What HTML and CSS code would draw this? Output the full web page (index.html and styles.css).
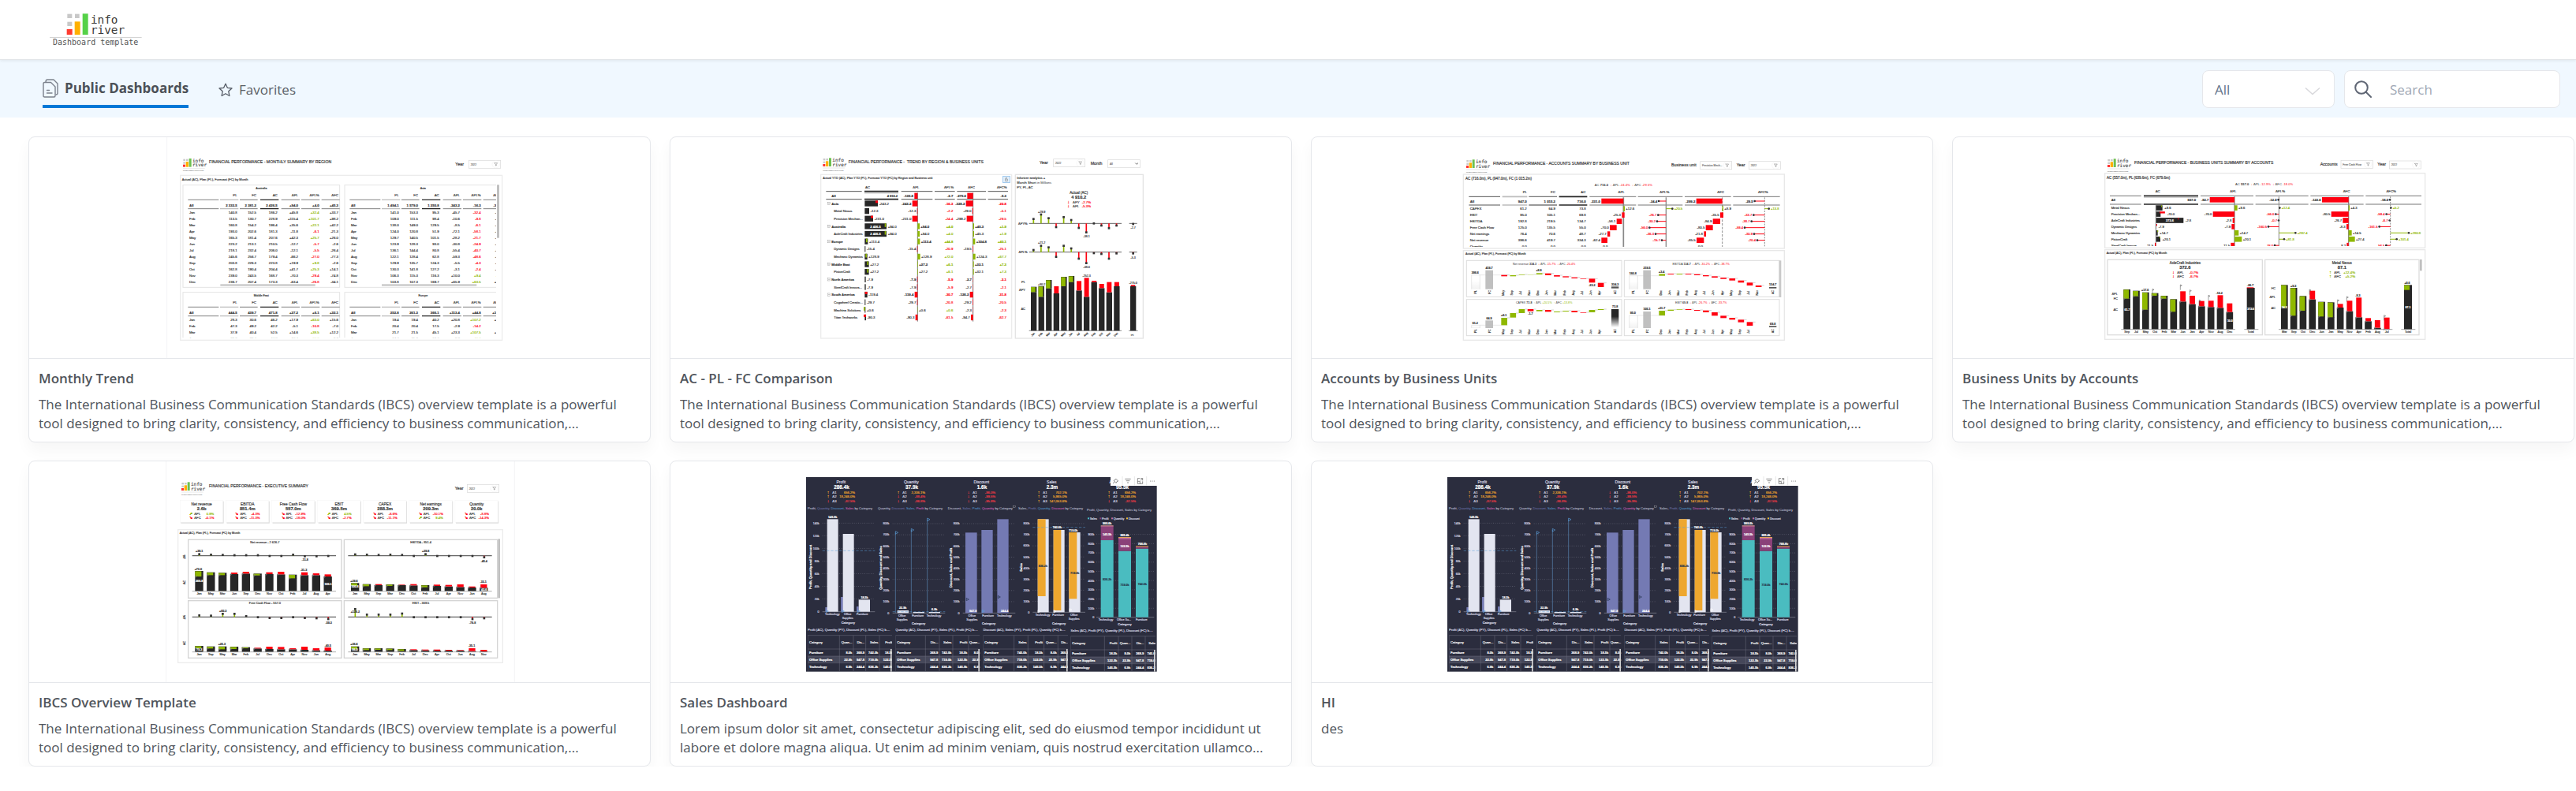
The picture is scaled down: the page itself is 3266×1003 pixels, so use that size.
FILE: index.html
```html
<!DOCTYPE html>
<html lang="en">
<head>
<meta charset="utf-8">
<meta name="viewport" content="width=device-width, initial-scale=1">
<title>Public Dashboards - Inforiver</title>
<link rel="stylesheet" href="styles.css">
</head>
<body>
<header class="site-header">
  <svg class="logo" viewBox="190 48 351 132" role="img" aria-label="Inforiver Dashboard template">
    <g fill="#c8c8c8"><rect x="257" y="53" width="18" height="16"/><rect x="286" y="53" width="17" height="16"/><rect x="257" y="83" width="18" height="16"/></g>
    <rect x="255" y="111" width="21" height="21" fill="#ff3b30"/>
    <rect x="285" y="82" width="21" height="50" fill="#ffb000"/>
    <rect x="315" y="52" width="21" height="80" fill="#56d148"/>
    <path d="M190 142.500H540" stroke="#d4d4d4" stroke-width="3"/>
    <g class="mono" fill="#3c3c3c"><text x="346" y="90" font-size="43">info</text><text x="346" y="130" font-size="43">river</text><text x="202" y="172" font-size="30" fill="#555">Dashboard template</text></g>
  </svg>
</header>
<div class="toolbar">
  <nav class="tabs" aria-label="Dashboards">
    <a class="tab tab-active" href="#public" aria-current="page">
      <svg width="20" height="24" viewBox="0 0 20 24" fill="none" stroke="#7b818c" stroke-width="1.400" stroke-linejoin="round" stroke-linecap="round" aria-hidden="true"><path d="M3 4.500H10.500L16 10V21.500Q16 23 14.500 23H2.500Q1 23 1 21.500V6Q1 4.500 2.500 4.500Z"/><path d="M4 4Q4 1 6 1H14L19 6V18Q19 20 17 20M5.500 14.500H8.500M5.500 18H12"/></svg>
      <span>Public Dashboards</span>
    </a>
    <a class="tab" href="#favorites">
      <svg width="18" height="18" viewBox="0 0 18 18" fill="none" stroke="#555b66" stroke-width="1.300" stroke-linejoin="round" aria-hidden="true"><path d="M9 1.200L11.300 6.300L17 7L12.800 10.800L13.900 16.500L9 13.700L4.100 16.500L5.200 10.800L1 7L6.700 6.300Z"/></svg>
      <span>Favorites</span>
    </a>
  </nav>
  <div class="filters">
    <div class="field select-field">
      <select aria-label="Filter dashboards"><option>All</option></select>
      <svg class="chevron" width="20" height="12" viewBox="0 0 20 12" fill="none" stroke="#d9d9dc" stroke-width="1.600" aria-hidden="true"><path d="M1 1.500L10 9.500L19 1.500"/></svg>
    </div>
    <label class="field search-field">
      <svg width="22" height="22" viewBox="0 0 22 22" fill="none" stroke="#5f6674" stroke-width="2" stroke-linecap="round" aria-hidden="true"><circle cx="9" cy="9" r="7.800"/><path d="M14.500 14.500L21 21"/></svg>
      <input type="search" placeholder="Search" aria-label="Search">
    </label>
  </div>
</div>
<main class="cards">
  <article class="card raised"><div class="thumb" data-chart="monthly"></div><div class="card-body"><h2>Monthly Trend</h2><p>The International Business Communication Standards (IBCS) overview template is a powerful tool designed to bring clarity, consistency, and efficiency to business communication,...</p></div></article>
  <article class="card raised"><div class="thumb" data-chart="trend"></div><div class="card-body"><h2>AC - PL - FC Comparison</h2><p>The International Business Communication Standards (IBCS) overview template is a powerful tool designed to bring clarity, consistency, and efficiency to business communication,...</p></div></article>
  <article class="card raised"><div class="thumb" data-chart="accounts"></div><div class="card-body"><h2>Accounts by Business Units</h2><p>The International Business Communication Standards (IBCS) overview template is a powerful tool designed to bring clarity, consistency, and efficiency to business communication,...</p></div></article>
  <article class="card raised"><div class="thumb" data-chart="units"></div><div class="card-body"><h2>Business Units by Accounts</h2><p>The International Business Communication Standards (IBCS) overview template is a powerful tool designed to bring clarity, consistency, and efficiency to business communication,...</p></div></article>
  <article class="card raised"><div class="thumb" data-chart="overview"></div><div class="card-body"><h2>IBCS Overview Template</h2><p>The International Business Communication Standards (IBCS) overview template is a powerful tool designed to bring clarity, consistency, and efficiency to business communication,...</p></div></article>
  <article class="card raised"><div class="thumb" data-chart="sales"></div><div class="card-body"><h2>Sales Dashboard</h2><p>Lorem ipsum dolor sit amet, consectetur adipiscing elit, sed do eiusmod tempor incididunt ut labore et dolore magna aliqua. Ut enim ad minim veniam, quis nostrud exercitation ullamco...</p></div></article>
  <article class="card raised"><div class="thumb" data-chart="sales"></div><div class="card-body"><h2>HI</h2><p>des</p></div></article>
</main>
<script src="charts.js"></script>
</body>
</html>
```
FILE: styles.css
```css
* { box-sizing: border-box; }
body {
  margin: 0;
  background: #fff;
  color: #50555c;
  font-family: "Open Sans", "Noto Sans", sans-serif;
  font-size: 17px;
  line-height: 24px;
}
.mono { font-family: "DejaVu Sans Mono", monospace; }

.site-header {
  position: relative;
  height: 76px;
  padding: 16px 63px;
  border-bottom: 1px solid #e2e5e9;
  box-shadow: 0 1px 4px rgba(0, 0, 0, 0.08);
}
.logo { display: block; width: 117px; height: 44px; }

.toolbar {
  display: flex;
  justify-content: space-between;
  align-items: center;
  flex-wrap: wrap;
  padding: 12px 20px 12px 54px;
  background: #f0f8ff;
}
.tabs { display: flex; gap: 38px; }
.tab {
  display: flex;
  align-items: center;
  gap: 8px;
  height: 49px;
  padding-top: 2px;
  color: #5a5f67;
  text-decoration: none;
}
.tab-active {
  padding-top: 3px;
  border-bottom: 4px solid #0078d7;
  color: #4c5158;
  font-weight: 700;
}

.filters { display: flex; gap: 12px; }
.field {
  display: flex;
  align-items: center;
  height: 48px;
  border: 1px solid #e5e7eb;
  border-radius: 8px;
  background: #fff;
}
.select-field { position: relative; width: 168px; }
.select-field select {
  width: 100%;
  height: 100%;
  padding: 2px 15px 0;
  border: 0;
  border-radius: 8px;
  background: none;
  appearance: none;
  color: #64748b;
  font: inherit;
}
.chevron { position: absolute; right: 17px; top: 20px; pointer-events: none; }
.search-field { width: 274px; padding: 0 12px; gap: 23px; }
.search-field input {
  flex: 1;
  min-width: 0;
  padding: 2px 0 0;
  border: 0;
  background: none;
  color: #50555c;
  font: inherit;
  outline: 0;
}
.search-field input::placeholder { color: #a0a7b4; opacity: 1; }

.cards {
  display: grid;
  grid-template-columns: repeat(auto-fill, minmax(min(700px, 100%), 1fr));
  gap: 23px 24px;
  padding: 24px 2px 0 36px;
  overflow: hidden;
}
.card {
  border: 1px solid #e5e7eb;
  border-radius: 8px;
  background: #fff;
}
.raised { box-shadow: 0 10px 20px rgba(0, 0, 0, 0.04); }
.thumb { border-bottom: 1px solid #e5e7eb; overflow: hidden; }
.thumb svg { display: block; width: 100%; }
.thumb > svg { height: 280px; }
.thumb text { font-family: "Liberation Sans", Arial, sans-serif; }
.thumb .mono text { font-family: "DejaVu Sans Mono", monospace; }
.card-body { display: grid; gap: 9px; padding: 13px 12px 11px; }
.card-body h2 { margin: 0; font-size: 17px; font-weight: 600; line-height: 24px; }
.card-body p { height: 48px; margin: 0; overflow: hidden; }
```
FILE: charts.js
```js
const RED = '#ff0010', GREEN = '#8fb800', INK = '#262626', GREY = '#bdbdbd', TXT = '#333';

const R = (x, y, w, h, f, extra = '') => `<rect x="${x}" y="${y}" width="${w}" height="${h}" fill="${f}" ${extra}/>`;
const L = (x1, y1, x2, y2, c = '#777', w = 2, extra = '') => `<path d="M${x1} ${y1}L${x2} ${y2}" stroke="${c}" stroke-width="${w}" fill="none" ${extra}/>`;
const T = (x, y, s, size = 14, c = TXT, a = 'start', bold = 0, extra = '') =>
  `<text x="${x}" y="${y}" font-size="${size}" fill="${c}" ${s.includes('<tspan') ? '' : `stroke="${c}" stroke-width=".5"`} text-anchor="${a}" ${bold ? 'font-weight="700"' : ''} ${extra}>${s}</text>`;
const box = (x, y, w, h, c = '#e4e4e4', sw = 3) => R(x, y, w, h, '#fff', `stroke="${c}" stroke-width="${sw}"`);
const clip = (x, y, w, h, body) => `<svg x="${x}" y="${y}" width="${w}" height="${h}" viewBox="${x} ${y} ${w} ${h}" style="width:${w}px">${body}</svg>`;
const signColor = v => (v.startsWith('-') ? RED : GREEN);
const vert = (x, y, s, size = 12, c = TXT, bold = 0, a = 'middle') => T(x, y, s, size, c, a, bold, `transform="rotate(-90 ${x} ${y})"`);

function logo(x, y) {
  return `<g transform="translate(${x} ${y})">` +
    R(1, 2, 8, 7, '#ccc') + R(12, 2, 8, 7, '#ccc') + R(1, 13, 8, 7, '#ccc') +
    R(0, 23, 9, 9, '#f33') + R(11, 12, 10, 20, '#ffb000') + R(23, 0, 9, 32, '#6cc050') +
    `<g class="mono">${T(36, 14, 'info', 18, '#555')}${T(36, 31, 'river', 18, '#555')}</g>` +
    L(0, 38, 83, 38, '#ddd', 2) + T(0, 49, 'INTELLIGENT ANALYTICS', 6.5, '#aaa') + '</g>';
}
function picker(label, lx, x, y, w, value, arrow) {
  return T(lx, y + 19, label, 16, '#333') + box(x, y, w, 30, '#d8d8d8', 2) +
    T(x + 7, y + 19, value, 10, '#777') +
    (arrow ? L(x + w - 18, y + 12, x + w - 13, y + 17, '#333', 2) + L(x + w - 13, y + 17, x + w - 7, y + 12, '#333', 2)
      : `<circle cx="${x + w - 18}" cy="${y + 15}" r="14" fill="#fff" stroke="#e8e8e8"/><path d="M${x + w - 24} ${y + 10}h12l-4 5v5h-3v-5z" fill="none" stroke="#777" stroke-width="1.5"/>`);
}

function monthly() {
  const cols = [272, 345, 425, 504, 584, 657];
  const rules = [[85, 117, '#444', 2], [207, 70, GREY, 4], [282, 68, '#777', 3], [360, 70, INK, 4], [440, 70, '#444', 2], [516, 70, '#444', 2], [593, 70, '#444', 2]];
  const months = ['Jan', 'Feb', 'Mar', 'Apr', 'May', 'Jun', 'Jul', 'Aug', 'Sep', 'Oct', 'Nov', 'Dec'];
  const table = (ox, oy, w, h, title, rows) => box(66 + ox, 161 + oy, w, h) + clip(66 + ox, 161 + oy, w, h,
    T(364 + ox, 177 + oy, title, 11, TXT, 'middle') +
    ['PL', 'FC', 'AC', 'ΔPL', 'ΔPL%', 'ΔFC'].map((s, i) => T(cols[i] + ox, 204 + oy, s, 13, TXT, 'end')).join('') +
    [217, 251].map(y => rules.map(r => L(r[0] + ox, y + oy, r[0] + r[1] + ox, y + oy, r[2], r[3])).join('')).join('') +
    rows.map((r, i) => {
      const y = (i ? 245 + i * 24 : 242) + oy;
      return T(90 + ox, y, i ? months[i - 1] : 'All', 13, TXT, 'start', !i) +
        r.split(' ').map((v, j) => T(cols[j] + ox, y, v.replace('_', ' '), 13, i && j === 4 ? signColor(v) : TXT, 'end', !i)).join('');
    }).join(''));
  const a = ['2_332.5 2_381.2 2_426.5 +94.0 +4.0 +45.3', '140.8 152.5 186.2 +45.8 +32.4 +33.7', '113.5 130.7 228.9 +115.4 +101.7 +98.2', '160.8 154.2 196.4 +35.6 +22.1 +42.2', '193.0 202.6 181.3 -11.8 -6.1 -21.3', '165.3 181.4 207.6 +42.3 +25.7 +26.0', '223.2 213.1 210.5 -12.7 -5.7 -2.6', '218.1 232.4 206.0 -12.1 -5.5 -26.4', '245.6 256.7 179.4 -66.2 -27.0 -77.3', '203.8 226.3 223.8 +19.9 +9.8 -2.6', '162.8 190.4 204.4 +41.7 +25.3 +14.1', '239.0 243.5 168.7 -70.3 -29.4 -74.8', '236.7 207.4 173.3 -63.4 -26.8 -34.1'];
  const b = ['1_494.1 1_579.0 1_250.8 -243.2 -16.3 -328', '141.0 153.3 95.3 -45.7 -32.4 -58', '109.0 111.5 98.4 -10.6 -9.8 -13', '138.0 149.0 129.5 -8.5 -6.1 -19', '124.0 120.8 51.9 -72.1 -58.1 -68', '129.7 140.5 101.5 -28.2 -21.7 -39', '123.9 128.3 93.0 -30.8 -24.9 -35', '136.1 144.4 80.8 -55.4 -40.7 -63', '122.1 128.4 62.8 -59.3 -48.6 -65', '129.9 135.7 124.3 -5.5 -4.3 -11', '130.3 141.8 127.2 -3.1 -2.4 -14', '106.3 115.3 116.3 +10.0 +9.4 +1', '103.8 107.3 169.7 +65.9 +63.5 +62'];
  const c = ['444.5 439.7 471.8 +27.2 +6.1 +32.1', '28.3 30.6 46.2 +17.9 +63.0 +15.6', '47.3 49.2 42.2 -5.1 -10.8 -7.0', '37.9 40.4 52.5 +14.6 +38.5 +12.2', '36.3 38.7 47.0 +10.7 +27.2 +8.3'];
  const d = ['252.8 261.3 366.1 +113.4 +44.8 +104', '19.4 19.4 40.2 +20.8 +107.2 +20', '20.4 20.4 17.5 -2.9 -14.2 -3', '21.7 21.5 45.1 +23.3 +107.5 +23', '24.7 25.3 34.7 +9.9 +40.2 +9'];
  return L(5, -21, 5, 819, '#f4f4f6', 3) + logo(66, 60) + T(165, 78, 'FINANCIAL PERFORMANCE - MONTHLY SUMMARY BY REGION', 15.5, '#333') +
    picker('Year', 1102, 1153, 67, 121, '2022') + box(56, 124, 1224, 627, '#ececec', 4) +
    T(62, 143, 'Actual (AC), Plan (PL), Forecast (FC) by Month', 12) +
    clip(56, 150, 1201, 592, table(0, 0, 596, 389, 'Australia', a) + table(615, 0, 590, 389, 'Asia', b) + table(0, 408, 596, 200, 'Middle East', c) + table(615, 408, 590, 200, 'Europe', d)) +
    R(208, 538, 361, 7, '#c8c8c8') + R(822, 538, 361, 7, '#c8c8c8') + R(1260, 160, 9, 202, '#c0c0c0');
}

function delta(x, y, n, label, h = 22, size = 13, bold = 0) {
  return R(n < 0 ? x + n : x, y - h / 2, Math.abs(n), h, n < 0 ? RED : GREEN) +
    T(n < 0 ? x + n - 4 : x + n + 4, y + 5, label, size, TXT, n < 0 ? 'end' : 'start', bold);
}
function pins(y, x0, step, vals, lastX, last) {
  const pin = (x, v) => L(x, y, x, y + v, v > 0 ? RED : GREEN, 5) + R(x - 4, y + v - 4, 8, 8, '#333');
  return vals.map((v, i) => pin(x0 + step * i, v)).join('') + (lastX ? L(lastX - 15, y, lastX + 15, y, '#666', 3) + pin(lastX, last) : '');
}

function trend() {
  const rows = [['All', 0, 0, '', '-135.8', -12, '-2.7', '-275.0', -22, '-5.3'], ['Asia', 0, 50, '-243.2', '-243.2', -20, '-16.3', '-328.2', -27, '-20.8'],
    ['Metal Nexus', 1, 17, '-12.3', '-12.3', -2, '-2.2', '-29.0', -3, '-5.1'], ['Precision Mechan...', 1, 32, '-231.0', '-231.0', -20, '-24.4', '-299.2', -24, '-29.5'],
    ['Australia', 0, 83, '+94.0', '+94.0', 8, '+4.0', '+45.3', 4, '+1.9'], ['AxleCraft Industries', 1, 83, '+94.0', '+94.0', 8, '+4.0', '+45.3', 4, '+1.9'],
    ['Europe', 0, 12, '+113.4', '+113.4', 9, '+44.8', '+104.8', 8, '+40.1'], ['Dynamic Designs', 1, 3, '-15.4', '-15.4', -2, '-20.9', '-19.5', -2, '-25.1'],
    ['Mechano Dynamics', 1, 10, '+128.9', '+128.9', 10, '+72.0', '+124.3', 9, '+67.7'], ['Middle East', 0, 16, '+27.2', '+27.2', 2, '+6.1', '+32.1', 3, '+7.3'],
    ['PistonCraft', 1, 16, '+27.2', '+27.2', 2, '+6.1', '+32.1', 3, '+7.3'], ['North America', 0, 4, '-7.9', '-7.9', -2, '-5.9', '-2.7', -1, '-2.1'],
    ['SteelCraft Innova...', 1, 4, '-7.9', '-7.9', -2, '-5.9', '-2.7', -1, '-2.1'], ['South America', 0, 10, '-119.4', '-119.4', -11, '-30.7', '-126.2', -12, '-31.8'],
    ['Cogwheel Creatio...', 1, 3, '-29.7', '-29.7', -2, '-20.8', '-29.2', -2, '-20.5'], ['Machina Solutions', 1, 3, '+0.6', '+0.6', 1, '+0.6', '-2.3', -1, '-2.3'],
    ['Titan Techworks', 1, 5, '-90.3', '-90.3', -8, '-61.5', '-94.7', -8, '-62.7']];
  let s = logo(70, 58) + T(167, 78, 'FINANCIAL PERFORMANCE -&#160; TREND BY REGION &amp; BUSINESS UNITS', 15.5, '#333') +
    picker('Year', 894, 947, 62, 120, '2022') + picker('Month', 1088, 1154, 65, 122, 'All', 1) +
    box(62, 121, 726, 623, '#ececec', 4) + box(802, 121, 486, 623, '#e4e4e4', 4) +
    T(70, 138, 'Actual YTD (AC), Plan YTD (PL), Forecast YTD (FC) by Region and Business unit', 11.5) +
    R(755, 127, 26, 25, '#e3f0fb', 'stroke="#7db4e8" stroke-width="2"') + `<path d="M764 146v-8h8v8zM765 138v-4h6" fill="none" stroke="#666" stroke-width="1.500"/>`;
  [['AC', 240], ['ΔPL', 424], ['ΔPL%', 549], ['ΔFC', 635], ['ΔFC%', 751]].forEach(h => { s += T(h[1], 173, h[0], 13, TXT, 'middle'); });
  [185, 215].forEach((y, i) => [[82, 218], [228, 357], [368, 487], [495, 572], [580, 690], [698, 774]].forEach((r, k) => { s += L(r[0], y, r[1], y, k === 1 ? INK : '#555', k === 1 ? 5 : 3); }));
  s += R(228, 189, 129, 4, GREY) + L(430, 190, 430, 680, '#777', 3) + L(641, 190, 641, 680, '#777', 3);
  rows.forEach((r, i) => {
    const y = i ? 231 + (i - 1) * 28.9 : 202, bold = !r[1];
    s += T(r[1] ? 112 : 103, y + 5, r[0], 12.5, TXT, 'start', bold);
    if (i && !r[1]) s += R(88, y - 5, 10, 10, '#fff', 'stroke="#777"') + L(90, y, 96, y, '#555', 1);
    if (i) {
      s += R(229, y - 11, r[2], 22, INK) + (r[3][0] === '-' ? (r[5] < -7 ? R(220 + r[2], y - 11, 9, 9, RED) : '') : R(222 + r[2], y - 11, 5, 14, GREEN)) +
        T(234 + r[2], y + 5, r[3], 13);
      if (r[2] > 80) s += T(270, y + 5, '2 426.5', 12, '#fff', 'middle', 1);
    } else s += T(354, 207, '4 910.2', 12, TXT, 'end', 1);
    s += delta(430, y, r[5], r[4], 22, 13, bold) + delta(641, y, r[8], r[7], 22, 13, bold) +
      T(565, y + 5, r[6], 13, i ? signColor(r[6]) : TXT, 'end', bold) + T(768, y + 5, r[9], 13, i ? signColor(r[9]) : TXT, 'end', bold);
  });
  s += T(808, 139, 'Inforiver analytics +', 12.5) + T(808, 157, '<tspan font-weight="700">Month Short</tspan> in Millions', 12.5) + T(808, 174, 'PY, PL, AC', 12.5) +
    T(1043, 196, 'Actual (AC)', 13.5, TXT, 'middle') + T(1043, 214, '4 910.2', 17, '#333', 'middle', 1) +
    T(1000, 231, '↓', 17, RED, 'start', 1) + T(1020, 231, 'ΔPY', 13) + T(1089, 231, '-2.7%', 13, RED, 'end') +
    T(1000, 247, '↓', 17, RED, 'start', 1) + T(1020, 247, 'ΔPL', 13) + T(1089, 247, '-5.3%', 13, RED, 'end');
  s += L(854, 307, 1206, 307, '#666', 3) + pins(307, 871, 28.7, [-17, -34, -20, 14, -24, -13, 17, 34, 0, 8, 18, 8], 1250, 2) +
    L(854, 416, 1206, 416, '#666', 3) + pins(416, 871, 28.7, [-8, -24, -18, 18, -24, -14, 25, 42, 4, 7, 25, 5], 1250, 5) +
    T(848, 311, 'ΔPY%', 12, TXT, 'end') + T(848, 420, 'ΔPL%', 12, TXT, 'end') + T(902, 266, '+29.9', 11, TXT, 'middle') + T(902, 383, '+21.2', 11, TXT, 'middle') +
    T(1073, 360, '-38.1', 11, TXT, 'middle') + T(1073, 476, '-38.0', 11, TXT, 'middle') + T(1250, 327, '-2.7', 11, TXT, 'middle') + T(1250, 440, '-5.3', 11, TXT, 'middle');
  [[568, 548, 1], [586, 546, 1], [554, 522, 1], [573, 546, 0], [546, 510, 1], [530, 507, 1], [562, 526, 0], [586, 514, 0], [530, 525, 0], [553, 537, 0], [569, 530, 0], [546, 530, 0]].forEach((b, i) => {
    const x = 861 + i * 28.7;
    s += R(x, b[0], 22, 715 - b[0], INK) + (b[2] ? R(x, b[1], 22, b[0] - b[1], INK) + R(x, b[1] + 1, 17, b[0] - b[1] - 1, GREEN) : R(x + 2, b[1], 18, b[0] - b[1], RED)) +
      `<g transform="rotate(45 ${x + 11} 728)">${vert(x + 13, 731, ['Jan', 'Feb', 'Mar', 'Apr', 'May', 'Jun', 'Jul', 'Aug', 'Sep', 'Oct', 'Nov', 'Dec'][i], 10)}</g>`;
  });
  s += R(1239, 546, 22, 169, INK) + R(1241, 541, 17, 5, RED) + T(902, 542, '+80.2', 11, TXT, 'middle') + T(1073, 509, '-252.3', 11, TXT, 'middle') + T(1250, 537, '-275.0', 11, TXT, 'middle') +
    L(854, 715, 1206, 715, '#555') + L(1233, 715, 1268, 715, '#555') + T(840, 533, 'PL', 12, TXT, 'end') + T(840, 563, 'ΔPY', 12, TXT, 'end') + T(840, 636, 'AC', 12, TXT, 'end') + vert(1250, 731, 'Σ', 10);
  return s;
}

function kpiLine(x, y, pre, val, a, b, arrow = '↓', c = RED, size = 12) {
  return T(x, y, `${pre} <tspan font-weight="700">${val}</tspan> &#160;<tspan fill="${c}" font-weight="700">${arrow}</tspan> ΔPL <tspan fill="${c}">${a}</tspan> &#160;<tspan fill="${c}" font-weight="700">${arrow}</tspan> ΔFC <tspan fill="${c}">${b}</tspan>`, size, TXT, 'middle');
}
function pctPin(x, y, n, label, bold, c) {
  const col = n < 0 ? RED : GREEN;
  return L(x, y, x + n, y, col, 3) + `<circle cx="${x + n}" cy="${y}" r="4" fill="#333"/>` + T(n < 0 ? x + n - 6 : x + n + 7, y + 5, label, 12.5, c || col, n < 0 ? 'end' : 'start', bold);
}

function accounts() {
  const rows = [['All', '947.0', '1 015.2', '716.0', 0, -84, '-231.0', -28, '-24.4', 0, -99, '-299.2', -38, '-29.5'],
    ['CAPEX', '61.2', '64.9', '73.8', 0, 5, '+12.6', 24, '+20.5', 0, 4, '+8.9', 16, '+13.8'], ['EBIT', '95.0', '105.1', '69.8', 4, -10, '-25.3', -30, '-26.7', 4, -12, '-35.5', -42, '-33.7'],
    ['EBITDA', '192.8', '219.5', '134.7', -6, -20, '-58.1', -34, '-30.2', -8, -28, '-84.9', -50, '-38.7'], ['Free Cash Flow', '125.0', '135.5', '55.0', -26, -26, '-70.0', -63, '-56.0', -36, -27, '-80.5', -76, '-59.4'],
    ['Net earnings', '76.4', '70.6', '48.7', -51, -10, '-27.7', -40, '-36.3', -62, -8, '-21.8', -40, '-30.9'], ['Net revenue', '396.6', '419.7', '334.3', -61, -23, '-62.4', -16, '-15.7', -70, -28, '-85.5', -28, '-20.4'],
    ['Quantity', '0.0', '0.0', '0.0', -82, 0, '0.0', 0, '', -96, 0, '0.0', 0, '']];
  let s = logo(57, 64) + T(159, 84, 'FINANCIAL PERFORMANCE - ACCOUNTS SUMMARY BY BUSINESS UNIT', 15, '#333') +
    picker('Business unit', 837, 947, 71, 120, 'Precision Mech...') + picker('Year', 1085, 1132, 71, 120, '2022') +
    box(46, 120, 1221, 282, '#e8e8e8', 4) + box(46, 410, 1221, 341, '#e8e8e8', 4) + T(54, 140, 'AC (716.0m), PL (947.0m), FC (1 015.2m)', 13.5) +
    kpiLine(655, 164, 'AC', '716.0', '-24.4%', '-29.5%', '↓', RED, 12.5);
  [['PL', 280], ['FC', 387], ['AC', 502], ['ΔPL', 647], ['ΔPL%', 811], ['ΔFC', 1025], ['ΔFC%', 1186]].forEach(h => { s += T(h[1], 192, h[0], 13, TXT, 'middle'); });
  [205, 237].forEach(y => [[67, 186, '#555', 3], [194, 289, GREY, 5], [295, 402, '#777', 4], [410, 517, INK, 5], [526, 703, '#777', 3], [710, 880, '#777', 3], [888, 1064, '#777', 3], [1072, 1250, '#777', 3]].forEach(r => { s += L(r[0], y, r[1], y, r[2], r[3]); }));
  let t = L(655, 208, 655, 396, '#888', 5) + L(817, 208, 817, 396, '#888', 4) + L(1031, 208, 1031, 396, '#555', 2, 'stroke-dasharray="9 5"') + L(1192, 208, 1192, 396, '#555', 2, 'stroke-dasharray="6 4"');
  rows.forEach((r, i) => {
    const y = i ? 227 + i * 24 : 222, b = !i;
    t += T(71, y + 5, r[0], 13, TXT, 'start', b) + T(287, y + 5, r[1], 13, TXT, 'end', b) + T(396, y + 5, r[2], 13, TXT, 'end', b) + T(512, y + 5, r[3], 13, TXT, 'end', b) +
      delta(655 + r[4], y, r[5], r[6], 20, 13, b) + delta(1031 + r[9], y, r[10], r[11], 20, 13, b);
    if (r[7]) t += pctPin(817, y, r[7], r[8], b, b && TXT) + pctPin(1192, y, r[12], r[13], b, b && TXT);
  });
  s += clip(46, 207, 1218, 189, t) + T(54, 427, 'Actual (AC), Plan (PL), Forecast (FC) by Month', 11);
  const m = ['May', 'Sep', 'Jul', 'Nov', 'Dec', 'Jan', 'Mar', 'Feb', 'Aug', 'Jul', 'Jun', 'Apr'];
  const fall = (ox, oy, title, pl, plY, fc, fcY, ac, acY, steps, notes) => {
    let o = box(58 + ox, 448 + oy, 590, 138, '#ddd', 3) + title;
    o += `<rect x="${77 + ox}" y="${plY}" width="32" height="${557 + oy - plY}" fill="url(#fadeWhite)"/><path d="M${77 + ox} ${557 + oy}V${plY}h32V${557 + oy}" fill="none" stroke="#bbb"/>` +
      R(130 + ox, fcY, 29, 557 + oy - fcY, 'url(#hatch)') + L(109 + ox, plY, 214 + ox, plY, '#bbb', 1);
    o += T(91 + ox, plY - 5, pl, 11, TXT, 'middle', 1) + T(144 + ox, fcY - 5, fc, 11, TXT, 'middle', 1) + T(623 + ox, acY - 5, ac, 11, TXT, 'middle', 1);
    steps.forEach((q, i) => { o += R(190 + ox + i * 33.4, q[0], 23, q[1], q[2] ? GREEN : RED) + L(213 + ox + i * 33.4, q[3] || q[0], 223 + ox + i * 33.4, q[3] || q[0], '#aaa', 1.5) + vert(200 + ox + i * 33.4, 571 + oy, m[(i + (ox ? 4 : 0)) % 12], 11); });
    o += R(609 + ox, acY, 28, Math.max(5, 557 + oy - acY - 3), acY < 650 && oy ? 'url(#fadeInk)' : '#555') + vert(95 + ox, 568 + oy, 'PL', 11) + vert(149 + ox, 568 + oy, 'FC', 11) + vert(627 + ox, 568 + oy, 'AC', 11);
    return o + (notes || '');
  };
  s += fall(0, 0, kpiLine(353, 465, 'Net revenue', '334.3', '-15.7%', '-20.4%', '↓', RED, 11), '396.6', 503, '419.7', 485, '334.3', 547,
    [[503, 5], [504, 4, 1], [501, 2, 1], [501, 1, 1], [496, 5, 1], [497, 7], [504, 5], [508, 4], [512, 4], [516, 2], [517, 15], [533, 16]], T(333, 490, '+8.9', 11, TXT, 'middle', 1) + T(535, 545, '-23.2', 11, TXT, 'middle', 1)) +
    fall(600, 0, kpiLine(950, 465, 'EBITDA', '134.7', '-30.2%', '-38.7%', '↓', RED, 11), '192.8', 506, '219.5', 485, '134.7', 549,
      [[499, 7, 1], [498, 3], [498, 3, 1], [498, 3], [500, 4], [504, 4], [508, 5], [513, 5], [516, 8], [524, 8], [532, 11], [543, 6]], T(800, 494, '+3.4', 11, TXT, 'middle', 1)) +
    fall(0, 148, kpiLine(353, 612, 'CAPEX', '73.8', '+20.5%', '+13.8%', '↑', GREEN, 11), '61.2', 694, '64.9', 676, '73.8', 633,
      [[666, 28, 1], [648, 17, 1], [633, 15, 1], [633, 8], [636, 5, 1], [636, 7], [642, 3, 1], [639, 3, 1], [639, 6], [645, 2], [636, 9, 1], [633, 3, 1]], T(200, 661, '+6.1', 11, TXT, 'middle', 1) + T(301, 655, '-1.7', 11, TXT, 'middle', 1)) +
    fall(600, 148, kpiLine(950, 612, 'EBIT', '69.8', '-26.7%', '-33.7%', '↓', RED, 11), '95.0', 657, '105.1', 642, '69.8', 697,
      [[639, 18, 1], [635, 4, 1], [633, 2, 1], [633, 3], [636, 3], [638, 7], [645, 13], [658, 9], [666, 7], [673, 10], [682, 14]], T(800, 634, '+11.7', 11, TXT, 'middle', 1));
  return s + R(1247, 448, 8, 140, '#c8c8c8');
}

function stackBars(x0, step, w, base, bars, labels, dark = INK) {
  return bars.map((b, i) => {
    const x = x0 + i * step, g = b[2];
    return R(x, b[0], w, base - b[0], dark) + (g ? R(x, b[1], w, b[0] - b[1] + 1, dark) + R(x, b[1] + 1, w * 0.78, b[0] - b[1], GREEN) : R(x + w * 0.1, b[1], w * 0.8, b[0] - b[1], RED)) +
      `<path d="M${x + 2} ${b[0] + 6}V${b[0] - 3}l5 3-5 3" fill="none" stroke="#888" stroke-width="1.500"/>` + (labels ? T(x + w / 2, base + 14, labels[i], 11.5, TXT, 'middle') : '');
  }).join('');
}

function units() {
  const rows = [['All', 0, '', -94, '-82.7', -2, '-12.9', -101, '-122.6', -2, '-18.0'], ['Metal Nexus', 24, '+9.6', 11, '+9.6', 3, '+12.4', 4, '+4.3', 2, '+5.2'],
    ['Precision Mechan...', 17, '-70.0', -82, '-70.0', -12, '-56.0', -66, '-80.5', -15, '-59.4'], ['AxleCraft Industries', 104, '-2.8', -7, '-2.8', -1, '-0.7', -22, '-26.7', -3, '-6.7'],
    ['Dynamic Designs', 1, '-7.9', -11, '-7.9', -40, '-160.5', -8, '-8.3', -42, '-161.5'], ['Mechano Dynamics', 6, '+14.7', 16, '+14.7', 63, '+297.4', 12, '+14.5', 70, '+280.8'],
    ['PistonCraft', 16, '+20.1', 28, '+20.1', 20, '+81.8', 24, '+27.4', 24, '+101.4'], ['SteelCraft Innova...', -4, '-11.5', -14, '-11.5', -16, '-78.0', -7, '-8.2', -16, '-58.5']];
  let s = logo(66, 61) + T(168, 80, 'FINANCIAL PERFORMANCE - BUSINESS UNITS SUMMARY BY ACCOUNTS', 15, '#333') +
    picker('Accounts', 875, 954, 67, 121, 'Free Cash Flow') + picker('Year', 1093, 1138, 69, 120, '2022') + box(56, 116, 1218, 284, '#e8e8e8', 4) + box(56, 407, 1218, 341, '#e8e8e8', 4) +
    T(63, 137, 'AC (557.0m), PL (639.6m), FC (679.6m)', 13.5) + kpiLine(662, 161, 'AC', '557.0', '-12.9%', '-18.0%', '↓', RED, 12.5);
  [['AC', 257], ['ΔPL', 544], ['ΔPL%', 723], ['ΔFC', 975], ['ΔFC%', 1145]].forEach(h => { s += T(h[1], 189, h[0], 13, TXT, 'middle'); });
  [202, 234].forEach(y => [[75, 194], [204, 411], [420, 621], [629, 830], [838, 1040], [1048, 1260]].forEach((r, k) => { s += L(r[0], y, r[1], y, k === 1 ? INK : '#777', k === 1 ? 5 : 3); }));
  let t = R(204, 205, 207, 4, GREY) + L(250, 236, 250, 395, '#888', 3) + L(549, 205, 549, 395, '#888', 4) + L(718, 205, 718, 395, '#888', 3) + L(983, 205, 983, 395, '#888', 4) + L(1142, 205, 1142, 395, '#555', 2, 'stroke-dasharray="6 4"');
  rows.forEach((r, i) => {
    const y = i ? 224 + i * 23.8 : 217, b = !i;
    t += T(80, y + 5, r[0], 12.5, TXT, 'start', b) + (i ? (r[1] > 0 ? R(251, y - 10, r[1], 20, INK) + R(251 + r[1] * 0.8, y - 10, r[1] > 16 && r[1] < 100 && r[2][0] === '-' ? 20 : 3, 7, signColor(r[2])) + T(r[1] + (r[1] === 17 ? 276 : 259), y + 5, r[2], 12.5) : R(246, y - 10, 4, 20, RED) + T(240, y + 5, r[2], 12.5, TXT, 'end')) : T(402, y + 5, '557.0', 12.5, TXT, 'end', 1)) +
      (r[1] > 100 ? T(303, y + 5, '372.6', 12, '#fff', 'middle', 1) : '') +
      delta(549, y, r[3], r[4], 20, 12.5, b) + delta(983, y, r[7], r[8], 20, 12.5, b) + pctPin(718, y, r[5], r[6], b, b && TXT) + pctPin(1142, y, r[9], r[10], b, b && TXT);
  });
  s += clip(58, 203, 1214, 190, t) + T(62, 424, 'Actual (AC), Plan (PL), Forecast (FC) by Month', 11) + box(66, 445, 589, 286, '#ddd', 4) + box(665, 445, 586, 286, '#ddd', 4) + R(1254, 444, 8, 43, '#c0c0c0');
  const head = (x, n, v, a, b, ar, c) => T(x, 462, n, 13.5, '#333', 'middle') + T(x, 481, v, 17, '#333', 'middle', 1) + [a, b].map((q, i) => T(x - 48, 498 + i * 16, ar, 15, c, 'start', 1) + T(x - 30, 498 + i * 16, i ? 'ΔFC' : 'ΔPL', 13) + T(x + 50, 498 + i * 16, q, 13, c, 'end')).join('');
  s += head(361, 'AxleCraft Industries', '372.6', '-0.7%', '-6.7%', '↓', RED) + head(958, 'Metal Nexus', '87.1', '+12.4%', '+5.2%', '↑', GREEN) +
    stackBars(127, 35.5, 26, 710, [[592, 558, 1], [583, 563, 1], [634, 569, 1], [581, 572, 1], [592, 582, 1], [642, 595, 1], [604, 565, 0], [614, 582, 0], [622, 602, 0], [625, 601, 0], [628, 580, 0], [644, 611, 0]], ['Sep', 'Jul', 'May', 'Oct', 'Feb', 'Mar', 'Jun', 'Jan', 'Apr', 'Nov', 'Aug', 'Dec']) +
    stackBars(726, 35.4, 26, 710, [[626, 541, 1], [657, 552, 1], [638, 583, 1], [596, 563, 0], [660, 605, 1], [663, 607, 1], [627, 613, 0], [641, 601, 0], [664, 589, 0], [679, 667, 0], [704, 675, 0], [709, 665, 0]], ['Mar', 'Sep', 'Oct', 'Dec', 'Jun', 'Jan', 'May', 'Nov', 'Apr', 'Feb', 'Aug', 'Jul']) +
    R(596, 552, 30, 158, INK) + R(596, 550, 26, 3, RED) + R(1194, 541, 30, 169, INK) + R(1194, 542, 21, 18, GREEN) +
    T(611, 724, 'Total', 11.5, TXT, 'middle') + T(1209, 724, 'Total', 11.5, TXT, 'middle') + L(118, 710, 552, 710) + L(586, 710, 640, 710) + L(717, 710, 1150, 710) + L(1183, 710, 1237, 710);
  [[141, 638, '61.7'], [532, 682, '10.0'], [611, 635, '372.6'], [739, 630, '14.3'], [1209, 630, '87.1']].forEach(q => { s += T(q[0], q[1], q[2], 10.5, '#fff', 'middle', 1); });
  [[209, 564, '+17.6'], [491, 576, '-13.2'], [609, 546, '-26.7'], [773, 548, '+9.3'], [1018, 584, '-8.3'], [1206, 537, '+9.6']].forEach(q => { s += T(q[0], q[1], q[2], 11, TXT, 'middle', 1); });
  [['ΔPL', 105, 580], ['FC', 105, 596], ['AC', 105, 639], ['FC', 705, 558], ['ΔPL', 705, 590], ['AC', 705, 632]].forEach(q => { s += T(q[1], q[2], q[0], 12, TXT, 'end'); });
  [[343, 540], [379, 560], [415, 598], [450, 580], [237, 556], [834, 558], [941, 597], [976, 585], [1118, 656]].forEach(q => { s += `<path d="M${q[0]} ${q[1] + 20}v-20l6 3-6 3" fill="none" stroke="#444" stroke-width="1.500"/>`; });
  return s;
}

function overview() {
  let s = L(2, -33, 2, 810, '#f4f4f6', 3) + L(1327, -33, 1327, 810, '#f4f4f6', 3) + logo(60, 46) + T(165, 66, 'FINANCIAL PERFORMANCE - EXECUTIVE SUMMARY', 15, '#333') + picker('Year', 1100, 1147, 55, 121, '2022');
  [['Net revenue', '2.6b', '0.9%', '-0.1%'], ['EBITDA', '851.4m', '-4.3%', '-11.3%'], ['Free Cash Flow', '557.0m', '-12.9%', '-18.0%'], ['EBIT', '369.5m', '4.5%', '-2.7%'], ['CAPEX', '288.3m', '-6.6%', '-11.1%'], ['Net earnings', '209.3m', '-10.1%', '9.4%'], ['Quantity', '20.0k', '-8.8%', '-14.3%']].forEach((k, i) => {
    const x = 55 + i * 174.3, c = x + 82;
    s += R(x + 3, 119, 163, 84, '#dcdcdc') + R(x, 116, 163, 83, '#fff', 'stroke="#f0f0f0"') + T(c, 134, k[0], 14.5, '#333', 'middle') + T(c, 154, k[1], 17.5, '#333', 'middle', 1);
    [k[2], k[3]].forEach((v, j) => {
      const col = v[0] === '-' ? RED : GREEN, y = 171 + j * 16;
      s += T(c - 46, y, v[0] === '-' ? '↘' : '↗', 15, col, 'start', 1) + T(c - 28, y, j ? 'ΔFC' : 'ΔPL', 12.5) + T(c + 47, y, v, 12.5, col, 'end');
    });
  });
  s += box(47, 227, 1235, 506, '#ececec', 4) + T(53, 243, 'Actual (AC), Plan (PL), Forecast (FC) by Month', 11);
  const panel = (x, y, w, h, title, axis, px, bars, base, labels, notes) => box(x, y, w, h, '#d4d4d4', 4) + T(x + w / 2, y + 14, title, 11.5, TXT, 'middle') +
    L(x + 15, axis, x + 562, axis, '#666', 4) + pins(axis, x + 42, 44.6, px) + stackBars(x + 26, 44.5, 31, base, bars, labels) + L(x + 15, base, x + 562, base, '#888') +
    notes.map(n => T(n[0], n[1], n[2], 11, n[3] || TXT, 'middle', 1)).join('');
  s += panel(86, 265, 583, 222, 'Net revenue - 2 626.7', 326, [-6, -4, -3, -2, -2, -2, 1, 1, -4, 2, 2, 1], [[404, 384, 1], [399, 389, 1], [399, 391, 1], [396, 390, 0], [394, 387, 0], [400, 394, 1], [396, 389, 0], [397, 387, 0], [411, 398, 1], [400, 389, 0], [400, 393, 0], [405, 397, 0]], 461, ['Jan', 'May', 'Mar', 'Jun', 'Sep', 'Dec', 'Nov', 'Oct', 'Feb', 'Jul', 'Aug', 'Apr'], [[128, 312, '+39.1'], [530, 345, '-11.8'], [124, 380, '+73.0'], [525, 384, '-31.3'], [128, 425, '266.8', '#fff'], [618, 437, '183.1', '#fff']]) +
    panel(679, 265, 583, 222, 'EBITDA - 851.4', 326, [-5, -4, -3, -4, -3, 1, -6, 1, 1, 1, 1, 6], [[440, 430, 1], [441, 434, 1], [438, 434, 0], [440, 435, 1], [438, 436, 0], [439, 434, 0], [445, 438, 1], [441, 436, 0], [443, 437, 0], [445, 435, 0], [447, 443, 0], [448, 435, 0]], 461, ['Jan', 'May', 'Sep', 'Mar', 'Dec', 'Oct', 'Feb', 'Jul', 'Apr', 'Nov', 'Jun', 'Aug'], [[989, 312, '+39.8'], [1211, 350, '-45.4'], [717, 425, '+29.6'], [1208, 430, '-33.1'], [720, 447, '100.8', '#fff'], [1211, 458, '43.6', '#fff']]) +
    panel(86, 497, 583, 218, 'Free Cash Flow - 557.0', 559, [-6, -5, -12, -12, -3, 1, 4, 4, 1, 4, 5, 8], [[677, 669, 1], [678, 671, 1], [681, 671, 1], [680, 672, 1], [677, 674, 1], [679, 676, 0], [681, 672, 0], [682, 673, 0], [682, 678, 0], [684, 672, 0], [686, 678, 0], [687, 675, 0]], 692, ['Jan', 'Sep', 'May', 'Mar', 'Feb', 'Jul', 'Dec', 'Oct', 'Apr', 'Nov', 'Jun', 'Aug'], [[218, 540, '+60.3'], [620, 584, '-59.3'], [214, 667, '+25.3'], [617, 671, '-40.5'], [128, 686, '75.3', '#fff']]) +
    panel(679, 497, 583, 218, 'EBIT - 369.5', 559, [-30, -9, -9, -9, -13, 1, 1, 1, 1, 1, 8, 5], [[681, 671, 1], [684, 678, 1], [683, 678, 1], [684, 679, 1], [687, 681, 1], [685, 682, 0], [686, 683, 0], [687, 683, 0], [687, 684, 0], [687, 685, 0], [689, 678, 0], [690, 684, 0]], 692, ['Jan', 'May', 'Mar', 'Sep', 'Feb', 'Jul', 'Dec', 'Apr', 'Oct', 'Jun', 'Aug', 'Nov'], [[721, 543, '+129.2'], [1167, 586, '-79.8'], [717, 667, '+35.6'], [1164, 671, '-35.1'], [720, 686, '56.0', '#fff']]);
  return s + R(1264, 262, 8, 225, '#c0c0c0') + vert(76, 330, 'Δ%', 10) + vert(76, 427, 'AC', 12) + vert(76, 560, 'Δ%', 10) + vert(76, 658, 'AC', 12);
}

function sales() {
  const W = '#e3e5f0', P = '#747ab3', O = '#eea72f', B = '#5aa0dc', M = '#e06bd0', Rr = '#f03a45', F = '#d8dae6';
  let s = R(36, 27, 1334, 740, '#2b2d3e');
  [['Profit', '286.4k', 169, [['↑', '656.2%'], ['↑', '18,246.0%'], ['↓', '-87.5%']]], ['Quantity', '37.9k', 436, [['↑', '2,336.1%'], ['↓', '-88.4%'], ['↓', '-86.8%']]], ['Discount', '1.6k', 703, [['↓', '-96.0%'], ['↓', '-99.5%'], ['↓', '-95.9%']]], ['Sales', '2.3m', 970, [['↑', '702.1%'], ['↑', '5,965.0%'], ['↑', '147,053.6%']]], ['Average Profit', '95.5k', 1237, [['↑', '656.2%'], ['↑', '18,246.0%'], ['↓', '-87.5%']]]].forEach(k => {
    s += T(k[2], 51, k[0], 15, F, 'middle') + T(k[2] + 2, 71, k[1], 19, '#fff', 'middle', 1);
    k[3].forEach((v, i) => {
      const c = v[0] === '↑' ? O : Rr, y = 89 + i * 16.5, wide = k[0] === 'Sales' ? 58 : 53;
      s += T(k[2] - 53, y, v[0], 16, c, 'start', 1) + T(k[2] - 33, y, 'Δ' + (i + 1), 13, F) + T(k[2] + wide, y, v[1], 12.5, c, 'end');
    });
  });
  const title = (x, y, a, cols) => T(x, y, a.map((w, i) => `<tspan fill="${cols[i]}">${w}${i < 3 ? ',' : ''}</tspan>`).join(' ') + ' by Category', 12.5, F);
  s += title(42, 150, ['Profit', 'Quantity', 'Discount', 'Sales'], [F, P, B, M]) + title(309, 150, ['Quantity', 'Discount', 'Sales', 'Profit'], [F, P, B, M]) + title(575, 150, ['Discount', 'Sales', 'Profit', 'Quantity'], [F, P, B, M]) + title(843, 150, ['Sales', 'Profit', 'Quantity', 'Discount'], [F, P, B, M]) +
    title(1104, 157, ['Profit', 'Quantity', 'Discount', 'Sales'], [F, F, F, F]) + R(824, 136, 8, 7, 'none', 'stroke="#ccc"');
  const grid = (x1, x2, lx, top, step, n, base, names) => {
    let o = L(x1, base, x2, base, '#a5a7b5', 1.5) + T(lx, base + 4, '0', 11, F, 'end');
    for (let i = 0; i < n; i++) o += L(x1, top + i * step, x2, top + i * step, '#777988', 1.5, 'stroke-dasharray="3 5"') + T(lx, top + 4 + i * step, names(n - i), 11, F, 'end');
    return o;
  };
  const h = n => n + '00k';
  s += grid(98, 298, 86, 202, 48.1, 7, 539, n => n * 20 + 'k') + grid(365, 565, 352, 204, 42.4, 8, 544, h) + grid(632, 832, 620, 204, 42.4, 8, 544, h) + grid(898, 1098, 886, 204, 42.2, 8, 541, h) + grid(1140, 1360, 1132, 245, 35.1, 9, 560, h);
  s += R(109, 522, 8, 17, P) + R(116, 187, 42, 352, W) + R(168, 483, 9, 56, P) + R(176, 243, 42, 296, W) + R(228, 519, 8, 20, P) + R(236, 493, 43, 46, W) + L(98, 307, 298, 307, B, 1.5, 'stroke-dasharray="10 6"');
  s += R(383, 534, 43, 10, W) + R(443, 540, 43, 4, W) + R(503, 540, 43, 4, W) + [[376, 238], [436, 228], [497, 188]].map(q => L(q[0], q[1], q[0], 544, '#5b88b4', 2) + `<path d="M${q[0]} ${q[1] - 5}l10 5-10 6z" fill="none" stroke="${B}" stroke-width="2"/>`).join('') + L(365, 539, 565, 539, B, 1.5, 'stroke-dasharray="10 6"');
  s += R(642, 238, 44, 306, P) + R(703, 228, 43, 316, P) + R(763, 187, 43, 357, P);
  s += R(917, 187, 42, 354, W) + R(917, 187, 30, 293, O) + R(977, 228, 42, 313, W) + R(977, 228, 29, 306, O) + R(1036, 237, 43, 304, W) + R(1036, 237, 30, 253, O) + L(898, 218, 1098, 218, B, 1.5, 'stroke-dasharray="10 6"');
  s += R(1157, 267, 48, 293, '#4abcc0') + R(1157, 213, 48, 54, '#8a4179') + R(1157, 211, 48, 3, '#e9a0a0') + R(1224, 308, 48, 252, '#4abcc0') + R(1224, 262, 48, 46, '#8a4179') + R(1224, 255, 48, 8, '#c06c9c') + R(1224, 255, 48, 2, '#efbd36') + R(1290, 299, 48, 261, '#4abcc0') + R(1290, 292, 48, 7, '#8a4179') + R(1290, 289, 48, 3, '#e9a050');
  [[112, 537, B], [172, 537, B], [232, 537, B], [646, 492, '#21304a'], [706, 537, B], [766, 483, '#21304a'], [918, 538, '#fff'], [978, 538, '#fff'], [1038, 532, '#fff']].forEach(q => { s += `<path d="M${q[0]} ${q[1] - 5}l9 5-9 5z" fill="none" stroke="${q[2]}" stroke-width="2"/>`; });
  [[137, 184, '145.5k'], [258, 489, '18.5k'], [404, 529, '22.9k'], [524, 535, '6.9k'], [671, 540, '947.8'], [791, 540, '244.4'], [991, 223, '742.0k'], [1052, 233, '719.0k'], [1181, 208, '988.6k'], [1248, 251, '865.4k'], [1315, 286, '768.8k'], [1181, 248, '145.5k'], [1248, 293, '122.5k']].forEach(q => { s += T(q[0], q[1], q[2], 11, '#fff', 'middle', 1); });
  [[937, 369, '836.2k'], [1058, 395, '719.0k'], [1181, 420, '836.2k'], [1248, 441, '719.0k'], [1315, 438, '742.0k']].forEach(q => { s += T(q[0], q[1], q[2], 11, '#26344a', 'middle', 1); });
  [[136, 552, 'Technology'], [194, 552, 'Office'], [194, 567, 'Supplies'], [250, 552, 'Furniture'], [401, 558, 'Office'], [401, 572, 'Supplies'], [461, 557, 'Furniture'], [522, 557, 'Technology'], [667, 558, 'Office'], [667, 572, 'Supplies'], [728, 557, 'Furniture'], [790, 557, 'Technology'], [936, 554, 'Technology'], [995, 554, 'Furniture'], [1055, 554, 'Office'], [1055, 569, 'Supplies'], [1176, 573, 'Technology'], [1245, 573, 'Office Su...'], [1312, 573, 'Furniture']].forEach(q => { s += T(q[0], q[1], q[2], 11, F, 'middle'); });
  [[196, 584], [464, 588], [731, 588], [998, 587], [1248, 592]].forEach(q => { s += T(q[0], q[1], 'Category', 12, F, 'middle', 1); });
  s += vert(57, 369, 'Profit, Quantity and Discount', 12.2, '#fff', 1) + vert(323, 372, 'Quantity, Discount and Sales', 12.2, '#fff', 1) + vert(591, 372, 'Discount, Sales and Profit', 12.2, '#fff', 1) + vert(857, 370, 'Sales', 12.2, '#fff', 1);
  [['#4abcc0', 'Sales', 1107], ['#8a4179', 'Profit', 1153], ['#c06c9c', 'Quantity', 1197], ['#efbd36', 'Discount', 1254]].forEach(q => { s += R(q[2], 181, 6, 6, q[0]) + T(q[2] + 8, 188, q[1], 11, F); });
  const val = { Quan: ['8.0k', '22.9k', '6.9k'], Dis: ['368.9', '947.8', '244.4'], Sales: ['742.0k', '719.0k', '836.2k'], Profit: ['18.5k', '122.5k', '145.5k'] };
  const table = (x, oy, w, head, cols, ends) => {
    let o = T(x, 613 + oy, head, 12.5, F) + R(x + 1, 708 + oy, w - 2, 25, '#454759');
    [629, 681, 708, 734].forEach(y => { o += L(x, y + oy, x + w, y + oy, '#6d6f7f', 1.5); });
    o += L(x, 629 + oy, x, 767, '#6d6f7f', 1.5) + ends.map((e, i) => { const lx = i ? ends[i - 1] + 5 : e - 48; return L(lx, 629 + oy, lx, 767, '#6d6f7f', 1.5); }).join('');
    o += T(x + 6, 659 + oy, 'Category', 12.5, '#fff') + ['Furniture', 'Office Supplies', 'Technology'].map((n, i) => T(x + 6, 699 + oy + i * 27, n, 12, '#fff', 'start', 1)).join('');
    cols.forEach((c, j) => { o += T(ends[j], 659 + oy, c + (c === 'Quan' || c === 'Dis' ? '...' : ''), 12.5, '#fff', 'end') + val[c].map((v, i) => T(ends[j], 699 + oy + i * 27, v, 12, '#fff', 'end', 1)).join(''); });
    return clip(x, 600, w, 167, o) + R(x + w - 6, 681 + oy, 5, 86 - oy, '#d4d4d4');
  };
  s += table(42, 0, 321, 'Profit (AC), Quantity (PY), Discount (PL), Sales (FC) b....', ['Quan', 'Dis', 'Sales', 'Profit'], [211, 258, 310, 366]) +
    table(376, 0, 321, 'Quantity (AC), Discount (PY), Sales (PL), Profit (FC) b....', ['Dis', 'Sales', 'Profit', 'Quan'], [538, 589, 649, 698]) +
    table(709, 0, 323, 'Discount (AC), Sales (PY), Profit (PL), Quantity (FC) b....', ['Sales', 'Profit', 'Quan', 'Dis'], [875, 936, 989, 1034]) +
    table(1042, 3, 323, 'Sales (AC), Profit (PY), Quantity (PL), Discount (FC) b....', ['Profit', 'Quan', 'Dis', 'Sales'], [1219, 1270, 1321, 1370]);
  s += R(1194, 22, 177, 38, '#fff') + L(1239, 24, 1239, 58, '#ddd') + L(1285, 24, 1285, 58, '#ddd') + L(1331, 24, 1331, 58, '#ddd') +
    '<g fill="none" stroke="#555" stroke-width="2"><path d="M1203 51l7-7M1206 40l9 9 3-5 5-2-9-9-3 5z"/><path d="M1249 34h22M1253 41h14M1257 48h6"/><path d="M1305 32h-8v20h19v-9M1308 32h8v8M1316 32l-8 8M1297 43h9v9"/></g><g fill="#555"><circle cx="1346" cy="42" r="1.500"/><circle cx="1353" cy="42" r="1.500"/><circle cx="1360" cy="42" r="1.500"/></g>';
  return s;
}

const defs = '<defs><pattern id="hatch" width="4" height="4" patternUnits="userSpaceOnUse"><rect width="4" height="4" fill="#e4e4e4"/><path d="M0 0l4 4M4 0L0 4" stroke="#888" stroke-width=".8"/></pattern>' +
  '<linearGradient id="fadeInk" x2="0" y2="1"><stop offset=".4" stop-color="#262626"/><stop offset="1" stop-color="#fff"/></linearGradient>' +
  '<linearGradient id="fadeWhite" x2="0" y2="1"><stop offset=".4" stop-color="#fff"/><stop offset="1" stop-color="#f2f2f2"/></linearGradient></defs>';

/* Each report is drawn on its own canvas; origin is the canvas point at the card's top left corner. */
const charts = {
  monthly: [monthly, -519, -21], trend: [trend, -510, -21], accounts: [accounts, -531, -21],
  units: [units, -522, -21], overview: [overview, -519, -33], sales: [sales, -480, -33]
};
document.querySelectorAll('.thumb').forEach(el => {
  const [draw, x, y] = charts[el.dataset.chart];
  el.innerHTML = `<svg viewBox="${x} ${y} 2361 840" role="img" aria-label="Report preview">${defs}${draw()}</svg>`;
});
```
